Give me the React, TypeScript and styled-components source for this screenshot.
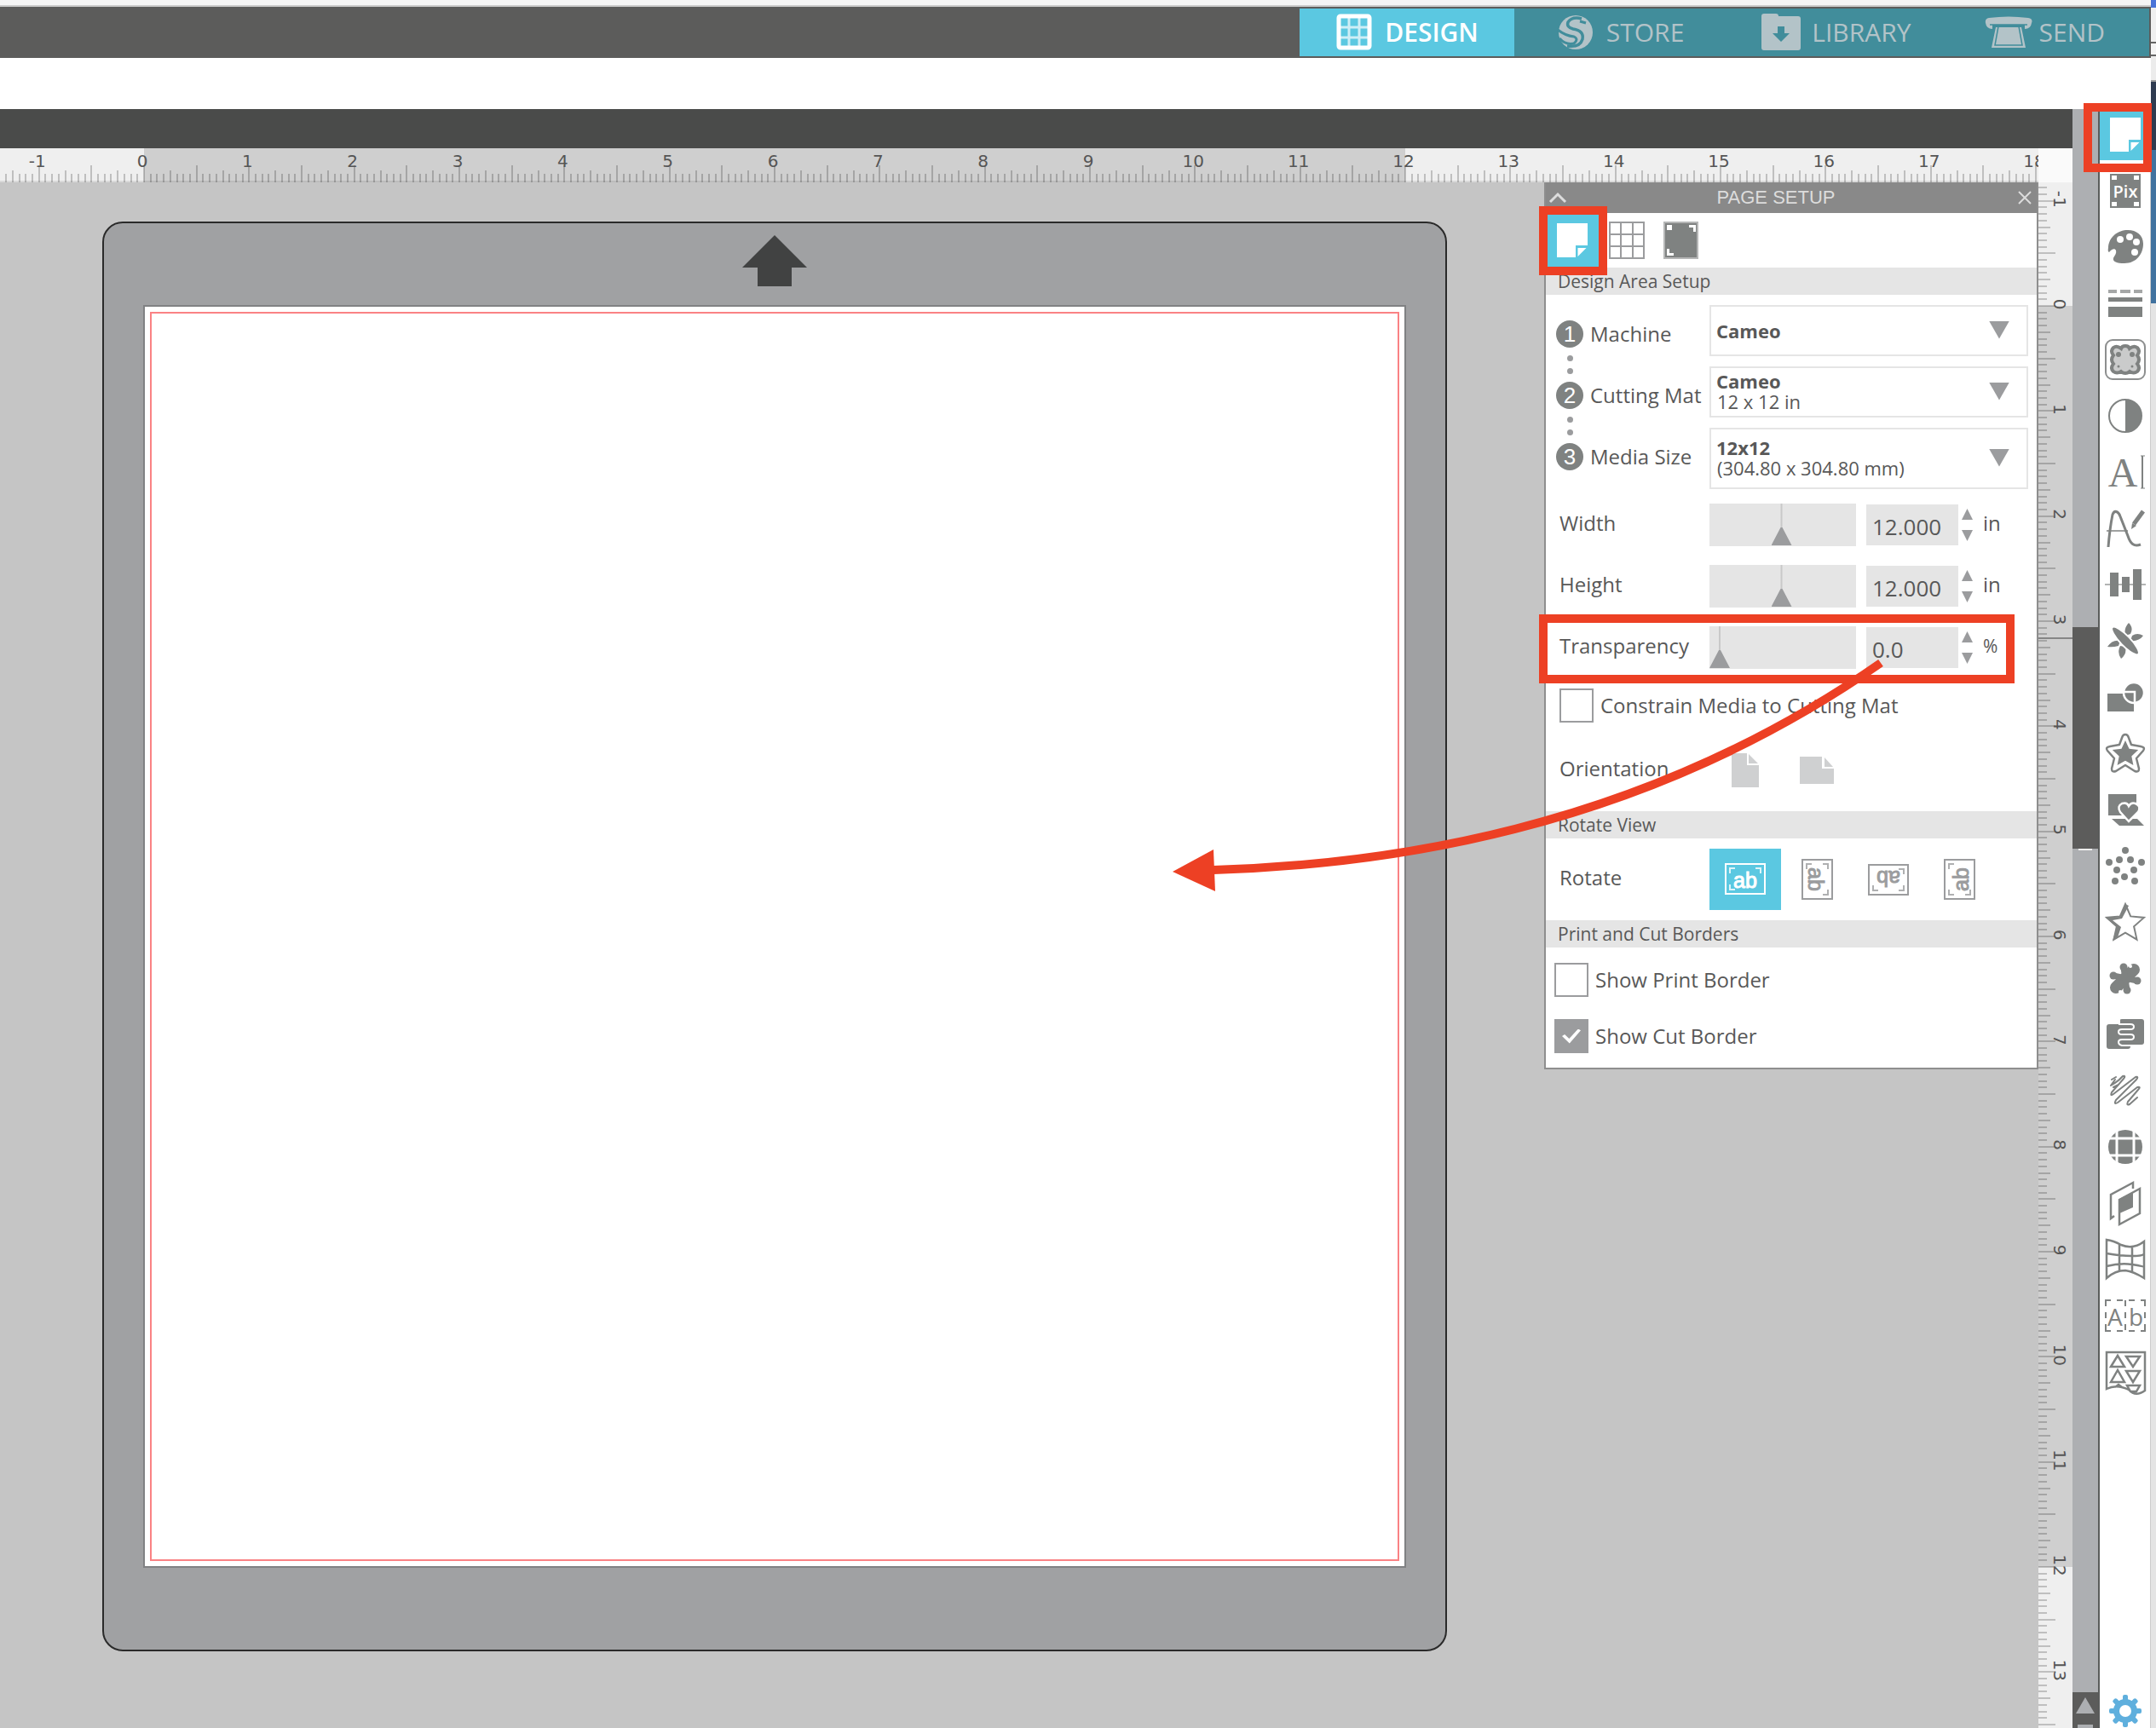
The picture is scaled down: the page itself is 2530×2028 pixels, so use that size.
import React, { useState } from "react";
import styled, { createGlobalStyle, css } from "styled-components";

const c = {
  cyan: "#5bc8e1",
  teal: "#418d9b",
  tealText: "#b3c3c8",
  bar: "#5c5c5b",
  dark: "#4a4b4a",
  icon: "#7f8281",
  text: "#585858",
  field: "#e5e5e5",
  mark: "#9b9c9e",
  red: "#ed4024",
};
const sans = `"Open Sans", "Noto Sans", sans-serif`;
const helv = `"Liberation Sans", Arial, sans-serif`;

const GlobalStyle = createGlobalStyle`
  *, *::before, *::after { box-sizing: border-box; }
  body { margin: 0; font-family: ${sans}; color: ${c.text}; overflow: hidden; }
  button { margin: 0; padding: 0; border: 0; background: none; font: inherit; color: inherit; cursor: pointer; }
  svg { display: block; }
`;

/* ---------- window frame ---------- */

const Desktop = styled.div`
  position: relative;
  display: grid;
  grid-template-columns: minmax(0, 1fr) 6px;
  height: 100vh;
  overflow: hidden;
`;
const DesktopEdge = styled.div`
  background: linear-gradient(
    #4a74d8 0 9px, #f0f0f0 9px 49px, #666 49px 51px, #f4f4f4 51px 64px, #666 64px 66px,
    #ececec 66px 94px, #999 94px 96px, #2f3b50 96px 176px, #41729f 176px 356px, #e4e4e4 356px
  );
`;
const AppWindow = styled.div`
  display: flex;
  flex-direction: column;
  min-height: 0;
  background: #fff;
`;
const TitleStrip = styled.div`
  flex: none;
  height: 8px;
  background: #f5f5f5;
  border-bottom: 2px solid #ccc;
`;
const TopBar = styled.header`
  flex: none;
  display: flex;
  justify-content: flex-end;
  height: 60px;
  padding: 2px;
  background: ${c.bar};
`;
const Nav = styled.nav`
  display: flex;
  gap: 8px;
  padding-right: 10px;
  background: ${c.teal};
`;
const NavTab = styled.button<{ $active?: boolean }>`
  display: flex;
  align-items: center;
  gap: 8px;
  padding: 0 42px 0 36px;
  font-size: 30px;
  line-height: 40px;
  font-weight: ${(p) => (p.$active ? 600 : 500)};
  color: ${(p) => (p.$active ? "#fff" : c.tealText)};
  background: ${(p) => (p.$active ? c.cyan : "transparent")};
`;
const OptionsBar = styled.div`
  flex: none;
  height: 60px;
`;
const Body = styled.div`
  flex: 1;
  display: flex;
  min-height: 0;
`;
const Workspace = styled.main`
  flex: 1;
  display: grid;
  grid-template: 46px 40px minmax(0, 1fr) / minmax(0, 1fr) 40px;
  min-width: 0;
`;
const DocumentBar = styled.div`
  grid-column: 1 / -1;
  background: ${c.dark};
`;
const RulerBox = styled.div`
  min-width: 0;
  min-height: 0;
  overflow: hidden;
  background: #efefef;
`;
const RulerCorner = styled.div`
  background: #fafafa;
`;
const ScrollTrack = styled.div`
  flex: none;
  display: flex;
  flex-direction: column;
  width: 30px;
  background: #adafb2;
`;
const ScrollThumb = styled.div`
  height: 260px;
  margin-top: 608px;
  background: ${c.bar};
`;
const ScrollMark = styled.div`
  width: 16px;
  height: 2px;
  margin: 0 auto;
  background: #eee;
`;
const ScrollButton = styled.button`
  display: flex;
  flex-direction: column;
  align-items: center;
  height: 42px;
  margin-top: auto;
  padding-top: 6px;
  background: ${c.bar};
`;

/* ---------- canvas ---------- */

const Canvas = styled.section`
  position: relative;
  min-width: 0;
  min-height: 0;
  padding: 46px 120px;
  overflow: hidden;
  background: #c5c5c5;
`;
const Mat = styled.div`
  display: flex;
  flex-direction: column;
  width: 1578px;
  padding: 0 46px 96px;
  background: #a0a1a3;
  border: 2px solid #2a2a2a;
  border-radius: 24px;
`;
const MatHead = styled.div`
  display: flex;
  justify-content: center;
  height: 96px;
  padding-top: 14px;
`;
const Paper = styled.div`
  aspect-ratio: 1;
  padding: 6px;
  background: #fff;
  border: 2px solid #808183;
`;
const CutBorder = styled.div`
  height: 100%;
  border: 2px solid #fa8284;
`;

/* ---------- page setup panel ---------- */

const Panel = styled.aside`
  position: absolute;
  top: 0;
  right: 0;
  width: 580px;
  background: #fff;
  border: 2px solid #8e8e8e;
  border-top: 0;
`;
const PanelTitle = styled.header`
  display: flex;
  align-items: center;
  height: 36px;
  background: #898989;
  color: #dcdcdc;
`;
const TitleButton = styled.button<{ $wide?: boolean }>`
  display: flex;
  justify-content: ${(p) => (p.$wide ? "flex-end" : "center")};
  width: ${(p) => (p.$wide ? 64 : 28)}px;
  padding-right: ${(p) => (p.$wide ? 6 : 0)}px;
`;
const PanelName = styled.h1`
  flex: 1;
  margin: 0;
  font: 400 22px/36px ${helv};
  text-align: center;
`;
const Tabs = styled.div`
  display: flex;
  gap: 2px;
  height: 64px;
`;
const TabButton = styled.button<{ $active?: boolean }>`
  display: flex;
  align-items: center;
  justify-content: center;
  width: 62px;
  background: ${(p) => (p.$active ? c.cyan : "transparent")};
`;
const SectionTitle = styled.h2`
  margin: 0;
  padding-left: 14px;
  font-size: 21px;
  font-weight: 400;
  line-height: 32px;
  background: ${c.field};
`;
const Section = styled.div`
  padding: 6px 0 4px;
`;
const SetupGrid = styled.div`
  display: grid;
  grid-template-columns: 192px 374px;
  height: 228px;
`;
const Steps = styled.ol`
  margin: 0;
  padding: 24px 0 0 12px;
  list-style: none;
`;
const Step = styled.li`
  display: grid;
  grid-template: 32px 40px / 32px 1fr;
  column-gap: 8px;
  font-size: 24px;
  line-height: 32px;
  white-space: nowrap;
`;
const StepNumber = styled.span`
  border-radius: 50%;
  background: ${c.icon};
  color: #fff;
  font: 26px/32px ${helv};
  text-align: center;
`;
const StepDots = styled.span`
  display: flex;
  flex-direction: column;
  align-items: center;
  justify-content: center;
  gap: 8px;
  &::before, &::after {
    content: "";
    width: 7px;
    height: 7px;
    border-radius: 50%;
    background: ${c.mark};
  }
`;
const Fields = styled.div`
  display: flex;
  flex-direction: column;
  gap: 12px;
  padding: 6px 0;
`;
const SelectBox = styled.div<{ $tall?: boolean }>`
  display: grid;
  grid-template: 100% / 1fr 40px;
  align-items: center;
  height: ${(p) => (p.$tall ? 72 : 60)}px;
  border: 2px solid ${c.field};
`;
const Select = styled.select<{ $hasNote?: boolean }>`
  grid-area: 1 / 1 / 2 / 3;
  height: 100%;
  margin: 0;
  padding: 0 8px ${(p) => (p.$hasNote ? 26 : 0)}px 6px;
  border: 0;
  border-radius: 0;
  appearance: none;
  background: transparent;
  color: ${c.text};
  font: 700 22px ${sans};
`;
const SelectNote = styled.span`
  grid-area: 1 / 1;
  padding: 22px 0 0 7px;
  font-size: 22px;
  line-height: 24px;
  pointer-events: none;
`;
const SelectArrow = styled.span`
  grid-area: 1 / 2;
  width: 24px;
  height: 21px;
  margin: 0 20px 2px -4px;
  background: ${c.mark};
  clip-path: polygon(0 0, 100% 0, 50% 100%);
  pointer-events: none;
`;
const Row = styled.div<{ $h: number }>`
  display: grid;
  grid-template-columns: 176px 1fr;
  align-items: center;
  height: ${(p) => p.$h}px;
  padding-left: 16px;
  font-size: 24px;
  line-height: 32px;
`;
const RowLabel = styled.label`
  padding-bottom: 4px;
`;
const Controls = styled.div`
  display: flex;
  align-items: center;
`;
const Slider = styled.input`
  width: 172px;
  height: 50px;
  margin: 0 12px 0 0;
  appearance: none;
  background: ${c.field};
  &::-webkit-slider-thumb {
    appearance: none;
    width: 24px;
    height: 50px;
    background: linear-gradient(#c9c9c9 28px, ${c.mark} 28px);
    clip-path: polygon(11px 0, 13px 0, 13px 28px, 24px 49px, 0 49px, 11px 28px);
  }
`;
const ValueInput = styled.input`
  width: 108px;
  height: 48px;
  padding: 4px 0 0 7px;
  border: 0;
  background: ${c.field};
  color: ${c.text};
  font: 26px ${sans};
`;
const Spinner = styled.span`
  display: flex;
  flex-direction: column;
  gap: 12px;
  margin: 0 12px 0 4px;
`;
const SpinButton = styled.button<{ $down?: boolean }>`
  width: 13px;
  height: 13px;
  background: ${c.mark};
  clip-path: ${(p) => (p.$down ? "polygon(0 0, 100% 0, 50% 100%)" : "polygon(50% 0, 100% 100%, 0 100%)")};
`;
const Unit = styled.span<{ $small: boolean }>`
  padding-bottom: 4px;
  font-size: ${(p) => (p.$small ? 21 : 24)}px;
`;
const CheckRow = styled.label<{ $h: number; $indent: number }>`
  display: flex;
  align-items: center;
  gap: 8px;
  height: ${(p) => p.$h}px;
  padding-left: ${(p) => p.$indent}px;
  font-size: 24px;
  line-height: 32px;
`;
const checkMark = css`
  background: ${c.mark};
  &::before {
    content: "";
    width: 22px;
    height: 17px;
    background: #fff;
    clip-path: polygon(0 50%, 14% 38%, 38% 68%, 86% 0, 100% 10%, 40% 100%);
  }
`;
const CheckBox = styled.input`
  display: flex;
  align-items: center;
  justify-content: center;
  width: 40px;
  height: 40px;
  margin: 0;
  appearance: none;
  border: 2px solid ${c.mark};
  background: #fff;
  &:checked { ${checkMark} }
`;
const ChoiceButton = styled.button<{ $active?: boolean }>`
  display: flex;
  align-items: center;
  justify-content: center;
  width: 84px;
  height: 72px;
  color: ${(p) => (p.$active ? "#fff" : c.mark)};
  background: ${(p) => (p.$active ? c.cyan : "transparent")};
`;
const BorderOptions = styled.div`
  padding: 5px 0 4px;
`;

/* ---------- right tool column ---------- */

const ToolColumn = styled.nav`
  flex: none;
  display: flex;
  flex-direction: column;
  gap: 6px;
  width: 62px;
  border-left: 2px solid #5a5c5b;
  border-right: 1px solid #ccc;
`;
const ToolButton = styled.button<{ $active?: boolean; $last?: boolean }>`
  flex: none;
  display: flex;
  align-items: center;
  justify-content: center;
  height: 60px;
  margin-top: ${(p) => (p.$last ? "auto" : 0)};
  margin-bottom: ${(p) => (p.$last ? -10 : 0)}px;
  color: ${c.icon};
  background: ${(p) => (p.$active ? c.cyan : "transparent")};
`;

/* ---------- annotations over the window ---------- */

const Highlight = styled.div<{ $x: number; $y: number; $w: number }>`
  position: absolute;
  right: ${(p) => p.$x}px;
  top: ${(p) => p.$y}px;
  width: ${(p) => p.$w}px;
  height: 81px;
  border: 10px solid ${c.red};
  pointer-events: none;
`;
const ArrowLayer = styled.svg`
  position: absolute;
  top: 760px;
  right: 310px;
  pointer-events: none;
`;

/* ---------- drawings ---------- */

const INCH = 1480 / 12;

function Ruler({ origin, last, vertical }: { origin: number; last: number; vertical?: boolean }) {
  const ticks = Array.from({ length: 400 }, (_, i) => i - 32);
  const labels = Array.from({ length: last + 2 }, (_, i) => i - 1);
  const inside = vertical
    ? { x: 0, y: origin, width: 40, height: 12 * INCH }
    : { x: origin, y: 0, width: 12 * INCH, height: 40 };
  return (
    <svg width="100%" height="100%" aria-hidden="true">
      <rect {...inside} fill="#cfcfcf" />
      {!vertical && <rect y="38" width="100%" height="2" fill="#000" opacity="0.09" />}
      <g fill="#000" shapeRendering="crispEdges">
        {ticks.map((t) => {
          const p = Math.round(origin + (t * INCH) / 16 - 1);
          const len = t % 8 === 0 ? 20 : t % 4 === 0 ? 14 : 10;
          return vertical ? (
            <rect key={t} x="0" y={p} width={len} height="2" opacity="0.2" />
          ) : (
            <rect key={t} x={p} y={40 - len} width="2" height={len} opacity="0.2" />
          );
        })}
      </g>
      <g fill="#555" fontFamily='"DejaVu Sans", sans-serif' fontSize="20" textAnchor="middle">
        {labels.map((n) => {
          const p = origin + n * INCH - 2;
          return vertical ? (
            <text key={n} transform={`translate(18 ${p}) rotate(90)`}>{n}</text>
          ) : (
            <text key={n} x={p} y="22">{n}</text>
          );
        })}
      </g>
      {vertical && <rect y="534" width="40" height="2" fill="#858585" />}
    </svg>
  );
}

const Icon = ({ children, size = 48 }: { children: React.ReactNode; size?: number }) => (
  <svg width={size} height={size} viewBox="0 0 48 48" overflow="visible" fill="currentColor" aria-hidden="true">
    {children}
  </svg>
);
const line = { fill: "none", stroke: "currentColor", strokeWidth: 2 } as const;

const PageIcon = () => (
  <Icon>
    <path fill="#fff" d="M6 4H42V30H28V44H6ZM30.500 33H40.500L30.500 43Z" />
  </Icon>
);

const starPath = (r: number, k: number, cy = 25) =>
  Array.from({ length: 10 }, (_, i) => {
    const a = (Math.PI * i) / 5 - Math.PI / 2;
    const d = i % 2 ? r * k : r;
    return `${i ? "L" : "M"}${(24 + d * Math.cos(a)).toFixed(1)} ${(cy + d * Math.sin(a)).toFixed(1)}`;
  }).join("") + "Z";

const tools: { name: string; art: React.ReactNode }[] = [
  {
    name: "PixScan",
    art: (
      <>
        <path d="M6 4H42V44H6Z" />
        <path fill="#fff" d="M8 6h6v5H8zM34 6h6v5h-6zM8 37h6v5H8zM34 37h6v5h-6z" />
        <text x="24" y="32" fill="#fff" fontFamily="Open Sans, sans-serif" fontWeight="600" fontSize="20" textAnchor="middle">Pix</text>
      </>
    ),
  },
  {
    name: "Fill",
    art: (
      <>
        <path d="M27 4C37 4 45 10 45 20C45 32 37 43 23 43C14 43 9 41 10 37C11 34 14 32 13 28C12 25 8 26 5 30C3 29 4 26 4 24C5 12 15 4 27 4Z" />
        <g fill="#fff"><circle cx="18" cy="15" r="4" /><circle cx="29" cy="12" r="4" /><circle cx="37" cy="18" r="4" /><circle cx="35" cy="30" r="4" /></g>
      </>
    ),
  },
  {
    name: "Line style",
    art: (
      <>
        <path opacity="0.7" d="M4 8h10v4H4zM18 8h12v4H18zM34 8h10v4H34z" />
        <path d="M4 17h40v5H4zM4 28h40v12H4z" />
      </>
    ),
  },
  {
    name: "Sticker",
    art: (
      <>
        <rect x="1" y="1" width="46" height="46" rx="8" {...line} stroke="#8d8f8f" />
        <path d="M24 8Q28 8 29 11Q34 7 38 10Q42 14 38 19Q42 24 38 29Q42 34 38 38Q34 41 29 38Q24 42 19 38Q14 41 10 38Q6 34 10 29Q6 24 10 19Q6 14 10 10Q14 7 19 11Q20 8 24 8Z" fill="#cacbcb" stroke="currentColor" strokeWidth="4" />
        <circle cx="16" cy="18" r="3" /><circle cx="32" cy="18" r="3" /><circle cx="16" cy="32" r="1.500" /><circle cx="32" cy="32" r="1.500" />
      </>
    ),
  },
  {
    name: "Contrast",
    art: (
      <>
        <circle cx="24" cy="24" r="19" {...line} />
        <path d="M24 5A19 19 0 0 1 24 43Z" />
      </>
    ),
  },
  {
    name: "Text style",
    art: (
      <>
        <text x="21" y="41" fontFamily="Liberation Serif, serif" fontSize="48" textAnchor="middle">A</text>
        <path {...line} d="M44 5V43" /><path {...line} d="M42 5h5M42 43h5" strokeWidth="1" />
      </>
    ),
  },
  {
    name: "Sketch",
    art: (
      <>
        <path {...line} strokeWidth="3" d="M4 46C5 33 7 18 9 8C11 2 16 4 18 10L27 33C30 42 34 46 42 43" />
        <path {...line} strokeWidth="1.500" d="M2 27H27" />
        <path {...line} strokeWidth="5" d="M45 4L34 19" /><path d="M31 25L32 18L37 21Z" />
      </>
    ),
  },
  {
    name: "Align",
    art: (
      <>
        <path d="M6 10h10v28H6zM20 15h9v18h-9zM33 6h10v36H33z" />
        <path opacity="0.6" d="M0 23h48v2H0z" />
      </>
    ),
  },
  {
    name: "Modify lines",
    art: (
      <>
        <path d="M28 3Q34 9 30 16L24 18Q22 9 28 3ZM45 18Q38 14 32 18L30 24Q40 25 45 18ZM3 31Q9 32 16 30L18 24Q9 22 3 31ZM19 45Q26 40 24 31L18 30Q14 38 19 45Z" />
        <ellipse cx="24" cy="24" rx="22" ry="6" transform="rotate(46 24 24)" stroke="#fff" strokeWidth="2" />
      </>
    ),
  },
  {
    name: "Weld shapes",
    art: (
      <>
        <path d="M3 20H34V41H3Z" />
        <circle cx="34" cy="19" r="12" stroke="#fff" strokeWidth="2.500" />
        <path d="M22 18H35V32" fill="none" stroke="#fff" strokeWidth="2.500" />
      </>
    ),
  },
  {
    name: "Offset",
    art: (
      <>
        <path {...line} strokeWidth="2.500" strokeLinejoin="round" d="M24 2Q27 2 28 6L31 14L42 16Q48 17 45 21L37 30L40 42Q40 47 35 45L24 38L13 45Q8 47 8 42L11 30L3 21Q0 17 6 16L17 14L20 6Q21 2 24 2Z" />
        <path d={starPath(16, 0.48)} />
      </>
    ),
  },
  {
    name: "Trace",
    art: (
      <>
        <path d="M4 6H37V31H4ZM8 35H38L46 43H17Z" />
        <path stroke="#fff" strokeWidth="2.500" d="M28 38L18 27Q14 20 20 17Q26 15 28 20Q31 15 36 17Q43 20 39 27Z" />
      </>
    ),
  },
  {
    name: "Rhinestones",
    art: [[24, 6], [5, 20], [17, 17], [30, 17], [43, 20], [14, 29], [34, 29], [23, 37], [12, 42], [35, 42]].map(([x, y]) => (
      <circle key={`${x}-${y}`} cx={x} cy={y} r="4" />
    )),
  },
  {
    name: "Emboss",
    art: (
      <>
        <path {...line} d={starPath(23, 0.46, 26)} />
        <path d="M24 3L18 18L1 19L14 30L9 46L15 42L19 30L9 22L20 20L28 5Z" />
      </>
    ),
  },
  {
    name: "Puzzle",
    art: (
      <>
        <path {...line} strokeWidth="14" strokeLinecap="round" d="M13 35L34 14" />
        <path {...line} strokeWidth="7" d="M22 12L26 38M10 21L38 27" />
        <circle cx="22" cy="11" r="4.500" /><circle cx="38" cy="27" r="4.500" /><circle cx="10" cy="21" r="4.500" /><circle cx="26" cy="38" r="4.500" />
        <circle cx="30" cy="10" r="2" fill="#fff" /><circle cx="18" cy="40" r="2" fill="#fff" />
      </>
    ),
  },
  {
    name: "Nesting",
    art: (
      <>
        <rect x="2" y="12" width="28" height="29" rx="3" /><rect x="17" y="6" width="29" height="30" rx="3" />
        <path fill="none" stroke="#fff" strokeWidth="2" d="M17 6V12H30Q34 12 34 15T30 18H20Q16 18 16 21T20 24H30Q34 24 34 27T30 30H20Q16 30 16 33T20 37H31V42" />
      </>
    ),
  },
  {
    name: "Sketch fill",
    art: (
      <path {...line} strokeLinecap="round" strokeLinejoin="round" d="M13 8L8 11M12 11L7 18Q16 13 21 7Q25 6 22 10L8 26Q6 31 10 28L36 8Q40 7 37 11L13 35Q10 41 15 38L38 20Q43 19 39 23L27 37Q25 42 29 40L38 32M10 20L16 17" />
    ),
  },
  {
    name: "Warp ball",
    art: (
      <>
        <circle cx="24" cy="24" r="20" />
        <path stroke="#fff" strokeWidth="3" d="M14 2V46M34 2V46M2 14H46M2 34H46" />
      </>
    ),
  },
  {
    name: "Shear",
    art: (
      <>
        <path {...line} strokeWidth="2.500" d="M33 7V0L7 14V42L11 39M17 20L41 7V36L17 49Z" />
        <path d="M17 19L33 11V29L17 36Z" />
      </>
    ),
  },
  {
    name: "Warp",
    art: (
      <path {...line} strokeWidth="2.500" d="M2 1Q10 2 19 7Q33 13 46 3V46Q33 38 24 37Q12 37 2 46ZM17 6V38M32 10V40M2 17Q18 20 32 20T46 17M2 32Q18 28 32 30T46 33" />
    ),
  },
  {
    name: "Text frame",
    art: (
      <>
        <path {...line} strokeDasharray="7 7" d="M0 6H48M0 42H48M1 6V42M47 6V42M24 6V42" />
        <text x="24" y="36" fontFamily="Open Sans, sans-serif" fontSize="28" textAnchor="middle">A b</text>
      </>
    ),
  },
  {
    name: "Pattern",
    art: (
      <path {...line} strokeWidth="2.500" d="M2 44V1H47V46Q36 54 28 45Q14 38 2 44ZM7 18L15 5L23 18ZM25 6H41L33 18ZM7 36L15 22L23 36ZM25 23H41L33 36ZM26 40H41L37 47H30ZM12 42L16 39L20 42" />
    ),
  },
];

function RotateIcon({ angle }: { angle: number }) {
  return (
    <svg width="50" height="50" viewBox="-25 -25 50 50" fill="currentColor" aria-hidden="true">
      <g transform={`rotate(${angle})`}>
        <rect x="-23" y="-18" width="46" height="35" {...line} />
        <path {...line} opacity="0.8" d="M-18 -7V-13H-12M12 -13H18V-7M-18 6V12H-12" />
        <text y="10" fontFamily={helv} fontSize="25" textAnchor="middle" stroke="currentColor" strokeWidth="1">ab</text>
      </g>
    </svg>
  );
}

const navItems: { label: string; art: React.ReactNode }[] = [
  {
    label: "DESIGN",
    art: (
      <>
        <rect x="6" y="5" width="36" height="37" rx="2" fill="none" stroke="currentColor" strokeWidth="5" />
        <path stroke="currentColor" strokeWidth="3" opacity="0.7" d="M18 6V42M30 6V42M6 18H42M6 30H42" />
      </>
    ),
  },
  {
    label: "STORE",
    art: (
      <>
        <circle cx="24" cy="24" r="20" />
        <path fill="none" stroke={c.teal} strokeWidth="3.500" d="M31 8Q20 5 15 12Q13 18 21 20Q34 22 32 32Q29 42 14 40" />
        <path fill="none" stroke={c.teal} strokeWidth="3" d="M3 21Q12 28 22 29Q28 32 22 37Q12 39 5 31M29 11L36 13" />
      </>
    ),
  },
  {
    label: "LIBRARY",
    art: (
      <>
        <path d="M1 5Q1 2 4 2H18Q21 2 21 5H44Q47 5 47 8V42Q47 45 44 45H4Q1 45 1 42Z" />
        <path fill={c.teal} d="M20 17H28V25H34L24 35L14 25H20Z" />
      </>
    ),
  },
  {
    label: "SEND",
    art: (
      <>
        <path d="M1 7Q24 4 47 7Q53 8 51 13Q50 20 43 20V15H5V20Q-2 20 -3 13Q-4 8 1 7Z" />
        <path d="M9 18H39L44 42H4Z" />
        <path fill="none" stroke={c.teal} strokeWidth="1.500" d="M2 15H46M12 17L8 39H40L36 17" />
      </>
    ),
  },
];

/* ---------- panel parts ---------- */

function Measure({ id, label, unit, initial, at }: { id: string; label: string; unit: string; initial: string; at: number }) {
  const [value, setValue] = useState(initial);
  return (
    <Row $h={72}>
      <RowLabel htmlFor={id}>{label}</RowLabel>
      <Controls>
        <Slider type="range" aria-label={`${label} slider`} defaultValue={at} />
        <ValueInput id={id} value={value} onChange={(e) => setValue(e.target.value)} />
        <Spinner>
          <SpinButton aria-label={`Increase ${label}`} />
          <SpinButton $down aria-label={`Decrease ${label}`} />
        </Spinner>
        <Unit $small={unit === "%"}>{unit}</Unit>
      </Controls>
    </Row>
  );
}

const setup = [
  { id: "machine", label: "Machine", value: "Cameo", note: "" },
  { id: "mat", label: "Cutting Mat", value: "Cameo", note: "12 x 12 in" },
  { id: "media", label: "Media Size", value: "12x12", note: "(304.80 x 304.80 mm)" },
];

function PageSetup() {
  return (
    <Panel>
      <PanelTitle>
        <TitleButton aria-label="Collapse">
          <svg width="22" height="14" {...line} strokeWidth="3"><path d="M2 12L11 3L20 12" /></svg>
        </TitleButton>
        <PanelName>PAGE SETUP</PanelName>
        <TitleButton $wide aria-label="Close">
          <svg width="16" height="16" {...line}><path d="M1 1L15 15M15 1L1 15" /></svg>
        </TitleButton>
      </PanelTitle>
      <Tabs>
        <TabButton $active aria-label="Page"><PageIcon /></TabButton>
        <TabButton aria-label="Grid">
          <Icon><path {...line} stroke={c.mark} d="M4 3H44V45H4ZM17 3V45M31 3V45M4 17H44M4 31H44" /></Icon>
        </TabButton>
        <TabButton aria-label="Registration marks">
          <Icon>
            <path fill={c.icon} stroke="#b5b6b6" strokeWidth="2" d="M4 3H43V45H4Z" />
            <path fill="#fff" d="M7 6h6v6H7zM33 6h8v8h-3v-5h-5zM7 34h3v5h5v3H7z" />
          </Icon>
        </TabButton>
      </Tabs>

      <SectionTitle>Design Area Setup</SectionTitle>
      <Section>
        <SetupGrid>
          <Steps>
            {setup.map((s, i) => (
              <Step key={s.id}>
                <StepNumber>{i + 1}</StepNumber>
                <label htmlFor={s.id}>{s.label}</label>
                {i < 2 && <StepDots />}
              </Step>
            ))}
          </Steps>
          <Fields>
            {setup.map((s) => (
              <SelectBox key={s.id} $tall={s.id === "media"}>
                <Select id={s.id} $hasNote={!!s.note}><option>{s.value}</option></Select>
                {s.note && <SelectNote>{s.note}</SelectNote>}
                <SelectArrow />
              </SelectBox>
            ))}
          </Fields>
        </SetupGrid>
        <Measure id="width" label="Width" unit="in" initial="12.000" at={49} />
        <Measure id="height" label="Height" unit="in" initial="12.000" at={49} />
        <Measure id="transparency" label="Transparency" unit="%" initial="0.0" at={0} />
        <CheckRow $h={64} $indent={16}>
          <CheckBox type="checkbox" />
          Constrain Media to Cutting Mat
        </CheckRow>
        <Row $h={88}>
          <RowLabel as="span">Orientation</RowLabel>
          <Controls>
            <ChoiceButton aria-label="Portrait">
              <svg width="32" height="40" fill="#cfd0d1"><path d="M0 0H18V14H32V40H0ZM20 1L31 12H20Z" /></svg>
            </ChoiceButton>
            <ChoiceButton aria-label="Landscape">
              <svg width="40" height="32" fill="#cfd0d1"><path d="M0 0H26V14H40V32H0ZM29 1L39 12H29Z" /></svg>
            </ChoiceButton>
          </Controls>
        </Row>
      </Section>

      <SectionTitle>Rotate View</SectionTitle>
      <Row $h={96}>
        <RowLabel as="span">Rotate</RowLabel>
        <Controls>
          {[0, 90, 180, 270].map((a) => (
            <ChoiceButton key={a} $active={a === 0} aria-label={`Rotate ${a} degrees`}><RotateIcon angle={a} /></ChoiceButton>
          ))}
        </Controls>
      </Row>

      <SectionTitle>Print and Cut Borders</SectionTitle>
      <BorderOptions>
        <CheckRow $h={66} $indent={10}><CheckBox type="checkbox" />Show Print Border</CheckRow>
        <CheckRow $h={66} $indent={10}><CheckBox type="checkbox" defaultChecked />Show Cut Border</CheckRow>
      </BorderOptions>
    </Panel>
  );
}

export default function App() {
  return (
    <Desktop>
      <GlobalStyle />
      <AppWindow>
        <TitleStrip />
        <TopBar>
          <Nav>
            {navItems.map((n, i) => (
              <NavTab key={n.label} $active={i === 0}>
                <svg width="56" height="48" viewBox="-4 0 56 48" fill="currentColor" aria-hidden="true">{n.art}</svg>
                {n.label}
              </NavTab>
            ))}
          </Nav>
        </TopBar>
        <OptionsBar />
        <Body>
          <Workspace>
            <DocumentBar />
            <RulerBox><Ruler origin={169} last={18} /></RulerBox>
            <RulerCorner />
            <Canvas>
              <Mat>
                <MatHead>
                  <svg width="76" height="60" fill="#414242"><path d="M38 0L76 38H58V60H18V38H0Z" /></svg>
                </MatHead>
                <Paper><CutBorder /></Paper>
              </Mat>
              <PageSetup />
            </Canvas>
            <RulerBox><Ruler origin={145} last={13} vertical /></RulerBox>
          </Workspace>
          <ScrollTrack>
            <ScrollThumb />
            <ScrollMark />
            <ScrollButton aria-label="Scroll up">
              <svg width="24" height="36" fill="#adafb2"><path d="M12 0L23 19H1ZM3 32H21V36H3Z" /></svg>
            </ScrollButton>
          </ScrollTrack>
          <ToolColumn>
            <ToolButton $active aria-label="Page setup"><PageIcon /></ToolButton>
            {tools.map((t) => (
              <ToolButton key={t.name} aria-label={t.name}><Icon>{t.art}</Icon></ToolButton>
            ))}
            <ToolButton $last aria-label="Preferences">
              <Icon>
                <g fill="#5fafdd">
                  <circle cx="24" cy="24" r="14" />
                  {[0, 45, 90, 135].map((a) => (
                    <rect key={a} x="21" y="5" width="6" height="38" rx="2" transform={`rotate(${a} 24 24)`} />
                  ))}
                </g>
                <circle cx="24" cy="24" r="7" fill="#fff" />
              </Icon>
            </ToolButton>
          </ToolColumn>
        </Body>
      </AppWindow>
      <DesktopEdge />
      <Highlight $x={5} $y={121} $w={80} />
      <Highlight $x={644} $y={242} $w={80} />
      <Highlight $x={166} $y={721} $w={558} />
      <ArrowLayer width="850" height="300" viewBox="1370 760 850 300" aria-hidden="true">
        <path d="M1424 1021Q1879 1007 2207 778" fill="none" stroke={c.red} strokeWidth="10" />
        <path d="M1376 1023L1424 997L1426 1046Z" fill={c.red} />
      </ArrowLayer>
    </Desktop>
  );
}
